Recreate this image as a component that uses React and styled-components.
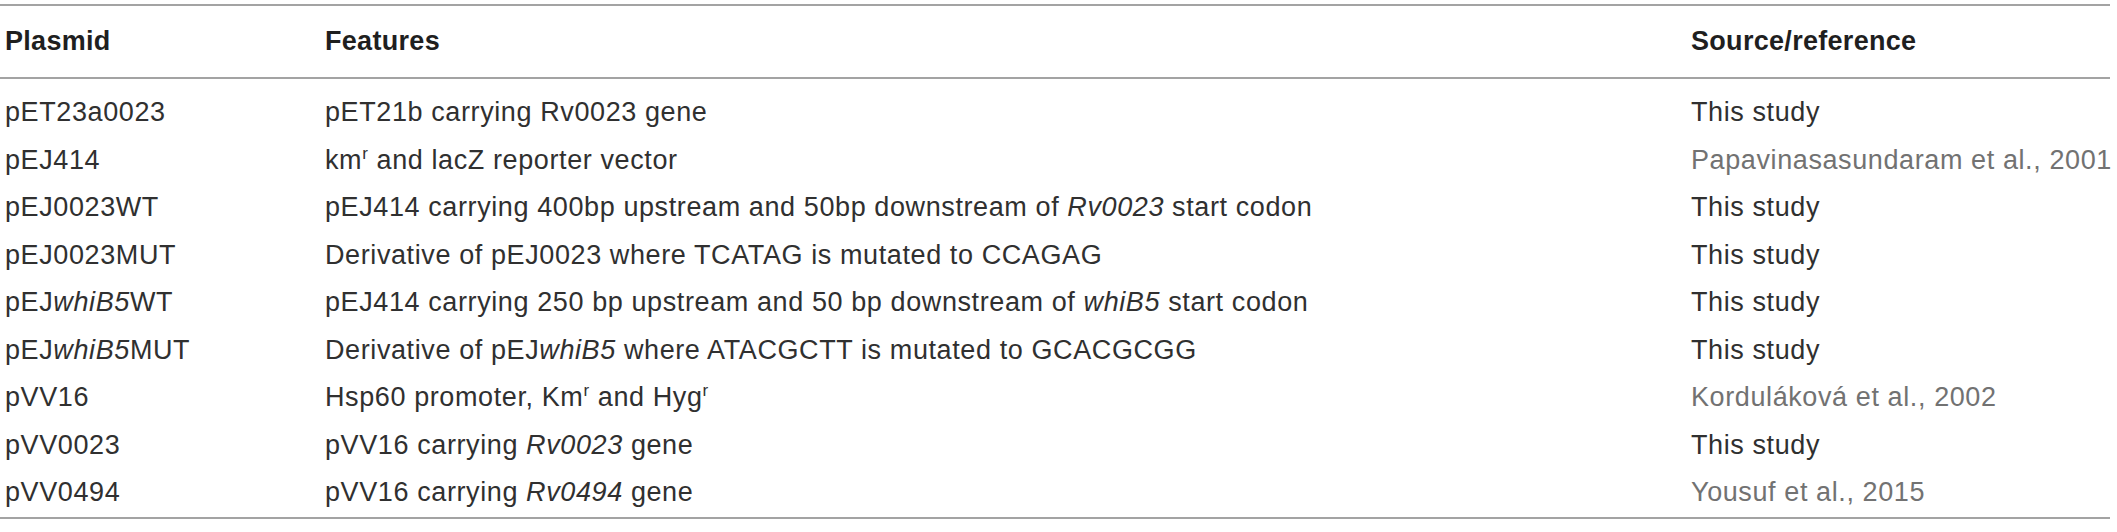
import React from "react";
import styled, { createGlobalStyle } from "styled-components";

const GlobalStyle = createGlobalStyle`
  body {
    margin: 0;
    background: #ffffff;
  }
`;

const Table = styled.div`
  width: 2110px;
  margin-top: 4px;
  font-family: "Liberation Sans", Arial, Helvetica, sans-serif;
  font-size: 27px;
  letter-spacing: 0.6px;
  color: #303030;
  border-top: 2px solid #a3a3a3;
  border-bottom: 2px solid #a3a3a3;
`;

const Row = styled.div`
  display: grid;
  grid-template-columns: 320px 1366px 1fr;
  align-items: center;
  padding-left: 5px;
  height: ${(props) => (props.head ? "71px" : "47.5px")};
  line-height: 47px;
  white-space: nowrap;
`;

const Head = styled(Row)`
  font-weight: bold;
  color: #1f1f1f;
  letter-spacing: 0.3px;
  border-bottom: 2px solid #a3a3a3;
`;

const Body = styled.div`
  padding-top: 10px;
`;

const Cell = styled.div`
  color: ${(props) => (props.muted ? "#727272" : "inherit")};
`;

const Sup = styled.sup`
  font-size: 17px;
  line-height: 0;
  vertical-align: 10px;
`;

const rows = [
  ["pET23a0023", <>pET21b carrying Rv0023 gene</>, "This study"],
  [
    "pEJ414",
    <>
      km<Sup>r</Sup> and lacZ reporter vector
    </>,
    "Papavinasasundaram et al., 2001",
    true,
  ],
  [
    "pEJ0023WT",
    <>
      pEJ414 carrying 400bp upstream and 50bp downstream of <i>Rv0023</i> start
      codon
    </>,
    "This study",
  ],
  [
    "pEJ0023MUT",
    <>Derivative of pEJ0023 where TCATAG is mutated to CCAGAG</>,
    "This study",
  ],
  [
    <>
      pEJ<i>whiB5</i>WT
    </>,
    <>
      pEJ414 carrying 250 bp upstream and 50 bp downstream of <i>whiB5</i> start
      codon
    </>,
    "This study",
  ],
  [
    <>
      pEJ<i>whiB5</i>MUT
    </>,
    <>
      Derivative of pEJ<i>whiB5</i> where ATACGCTT is mutated to GCACGCGG
    </>,
    "This study",
  ],
  [
    "pVV16",
    <>
      Hsp60 promoter, Km<Sup>r</Sup> and Hyg<Sup>r</Sup>
    </>,
    "Kordul\u00e1kov\u00e1 et al., 2002",
    true,
  ],
  [
    "pVV0023",
    <>
      pVV16 carrying <i>Rv0023</i> gene
    </>,
    "This study",
  ],
  [
    "pVV0494",
    <>
      pVV16 carrying <i>Rv0494</i> gene
    </>,
    "Yousuf et al., 2015",
    true,
  ],
];

export default function App() {
  return (
    <>
      <GlobalStyle />
      <Table>
        <Head head>
          <Cell>Plasmid</Cell>
          <Cell>Features</Cell>
          <Cell>Source/reference</Cell>
        </Head>
        <Body>
          {rows.map(([plasmid, features, source, muted], i) => (
            <Row key={i}>
              <Cell>{plasmid}</Cell>
              <Cell>{features}</Cell>
              <Cell muted={muted}>{source}</Cell>
            </Row>
          ))}
        </Body>
      </Table>
    </>
  );
}
